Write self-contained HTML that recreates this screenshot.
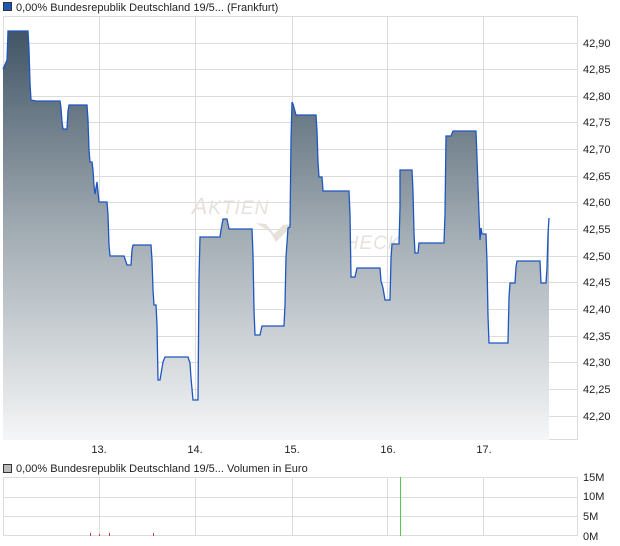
<!DOCTYPE html>
<html><head><meta charset="utf-8"><style>
html,body{margin:0;padding:0;background:#fff;width:620px;height:546px;overflow:hidden}
svg{display:block}
text{font-family:"Liberation Sans",sans-serif;font-size:11px;fill:#222}
</style></head><body>
<svg width="620" height="546" viewBox="0 0 620 546" xmlns="http://www.w3.org/2000/svg">
<defs>
<linearGradient id="g" x1="0" y1="30" x2="0" y2="440" gradientUnits="userSpaceOnUse">
<stop offset="0" stop-color="#415566"/>
<stop offset="0.5" stop-color="#a3adb4"/>
<stop offset="1" stop-color="#f5f6f7"/>
</linearGradient>
</defs>
<rect x="3.5" y="2.5" width="8" height="8" fill="#1e56b8" stroke="#333" stroke-width="1"/>
<text x="16" y="11">0,00% Bundesrepublik Deutschland 19/5... (Frankfurt)</text>
<g stroke="#dcdcdc" stroke-width="1" fill="none">
<line x1="3" y1="43.5" x2="578" y2="43.5"/><line x1="3" y1="69.5" x2="578" y2="69.5"/><line x1="3" y1="96.5" x2="578" y2="96.5"/><line x1="3" y1="122.5" x2="578" y2="122.5"/><line x1="3" y1="149.5" x2="578" y2="149.5"/><line x1="3" y1="176.5" x2="578" y2="176.5"/><line x1="3" y1="202.5" x2="578" y2="202.5"/><line x1="3" y1="229.5" x2="578" y2="229.5"/><line x1="3" y1="256.5" x2="578" y2="256.5"/><line x1="3" y1="282.5" x2="578" y2="282.5"/><line x1="3" y1="309.5" x2="578" y2="309.5"/><line x1="3" y1="336.5" x2="578" y2="336.5"/><line x1="3" y1="362.5" x2="578" y2="362.5"/><line x1="3" y1="389.5" x2="578" y2="389.5"/><line x1="3" y1="416.5" x2="578" y2="416.5"/>
<line x1="99.5" y1="16" x2="99.5" y2="440"/><line x1="195.5" y1="16" x2="195.5" y2="440"/><line x1="292.5" y1="16" x2="292.5" y2="440"/><line x1="387.5" y1="16" x2="387.5" y2="440"/><line x1="483.5" y1="16" x2="483.5" y2="440"/>
<rect x="3.5" y="16.5" width="574" height="423"/>
</g>
<text x="192" y="214" style="font-size:23px;fill:#e6e1db;font-style:italic;letter-spacing:1px">A<tspan style="font-size:19px">KTIEN</tspan></text>
<text x="330" y="249" style="font-size:19px;fill:#e6e1db;font-style:italic;letter-spacing:1px">CHECK</text>
<path d="M256 223 L270 232 L276 242 L294 224 L283 225 L274 234 L266 224 Z" fill="#e6e1db"/>
<path id="p" fill="url(#g)" stroke="none" d="M3 69 L7 60 L8 31 L28 31 L29 49 L30 83 L31 100 L36 101 L60 101 L61 108 L62 122 L63 129 L67 129 L68 111 L69 105 L87 105 L88 120 L89 150 L90 162 L92 162 L93 170 L94 186 L95 194 L96 188 L97 182 L98 192 L99 202 L107 202 L108 215 L109 245 L110 256 L124 256 L126 262 L127 265 L131 265 L132 250 L133 245 L151 245 L152 260 L153 290 L154 305 L156 305 L157 325 L158 380 L160 380 L163 362 L165 357 L188 357 L190 363 L191 378 L193 400 L198 400 L199 278 L200 237 L220 237 L221 230 L223 219 L227 219 L229 229 L252 229 L253 255 L254 310 L255 335 L260 335 L262 326 L284 326 L285 305 L286 257 L288 228 L290 227 L291 140 L292 102 L293 104 L296 115 L316 115 L317 131 L318 162 L319 177 L322 177 L323 191 L349 191 L350 214 L351 277 L355 277 L357 268 L380 268 L381 281 L383 288 L385 300 L390 300 L391 258 L392 244 L399 244 L400 207 L400 170 L412 170 L413 191 L414 233 L415 253 L418 253 L419 243 L444 243 L445 214 L446 136 L451 136 L453 131 L476 131 L477 158 L479 214 L480 240 L481 228 L482 234 L486 234 L487 262 L488 316 L489 343 L508 343 L509 298 L510 283 L515 283 L516 267 L517 261 L540 261 L541 283 L546 283 L547 268 L548 234 L549 218 L549 440 L3 440 Z"/>
<path fill="none" stroke="#1e56c0" stroke-width="1.3" d="M3 69 L7 60 L8 31 L28 31 L29 49 L30 83 L31 100 L36 101 L60 101 L61 108 L62 122 L63 129 L67 129 L68 111 L69 105 L87 105 L88 120 L89 150 L90 162 L92 162 L93 170 L94 186 L95 194 L96 188 L97 182 L98 192 L99 202 L107 202 L108 215 L109 245 L110 256 L124 256 L126 262 L127 265 L131 265 L132 250 L133 245 L151 245 L152 260 L153 290 L154 305 L156 305 L157 325 L158 380 L160 380 L163 362 L165 357 L188 357 L190 363 L191 378 L193 400 L198 400 L199 278 L200 237 L220 237 L221 230 L223 219 L227 219 L229 229 L252 229 L253 255 L254 310 L255 335 L260 335 L262 326 L284 326 L285 305 L286 257 L288 228 L290 227 L291 140 L292 102 L293 104 L296 115 L316 115 L317 131 L318 162 L319 177 L322 177 L323 191 L349 191 L350 214 L351 277 L355 277 L357 268 L380 268 L381 281 L383 288 L385 300 L390 300 L391 258 L392 244 L399 244 L400 207 L400 170 L412 170 L413 191 L414 233 L415 253 L418 253 L419 243 L444 243 L445 214 L446 136 L451 136 L453 131 L476 131 L477 158 L479 214 L480 240 L481 228 L482 234 L486 234 L487 262 L488 316 L489 343 L508 343 L509 298 L510 283 L515 283 L516 267 L517 261 L540 261 L541 283 L546 283 L547 268 L548 234 L549 218"/>
<text x="583" y="47">42,90</text><text x="583" y="73">42,85</text><text x="583" y="100">42,80</text><text x="583" y="126">42,75</text><text x="583" y="153">42,70</text><text x="583" y="180">42,65</text><text x="583" y="206">42,60</text><text x="583" y="233">42,55</text><text x="583" y="260">42,50</text><text x="583" y="286">42,45</text><text x="583" y="313">42,40</text><text x="583" y="340">42,35</text><text x="583" y="366">42,30</text><text x="583" y="393">42,25</text><text x="583" y="420">42,20</text>
<g text-anchor="middle">
<text x="99" y="453">13.</text><text x="195" y="453">14.</text><text x="292" y="453">15.</text><text x="388" y="453">16.</text><text x="484" y="453">17.</text>
</g>
<rect x="3.5" y="464.5" width="8" height="8" fill="#bbb" stroke="#333" stroke-width="1"/>
<text x="16" y="472">0,00% Bundesrepublik Deutschland 19/5... Volumen in Euro</text>
<g stroke="#dcdcdc" stroke-width="1" fill="none">
<line x1="3" y1="497.5" x2="578" y2="497.5"/><line x1="3" y1="516.5" x2="578" y2="516.5"/>
<line x1="99.5" y1="477" x2="99.5" y2="536"/><line x1="195.5" y1="477" x2="195.5" y2="536"/><line x1="292.5" y1="477" x2="292.5" y2="536"/><line x1="387.5" y1="477" x2="387.5" y2="536"/><line x1="483.5" y1="477" x2="483.5" y2="536"/>
<rect x="3.5" y="477.5" width="574" height="58"/>
</g>
<line x1="400.5" y1="477" x2="400.5" y2="536" stroke="#4ccc4c" stroke-width="1"/>
<g stroke="#d04040" stroke-width="1">
<line x1="90.5" y1="533" x2="90.5" y2="536"/><line x1="99.5" y1="534" x2="99.5" y2="536"/><line x1="109.5" y1="533" x2="109.5" y2="536"/><line x1="153.5" y1="533" x2="153.5" y2="536"/>
</g>
<text x="583" y="481">15M</text><text x="583" y="500">10M</text><text x="583" y="520">5M</text><text x="583" y="540">0M</text>
</svg>
</body></html>
